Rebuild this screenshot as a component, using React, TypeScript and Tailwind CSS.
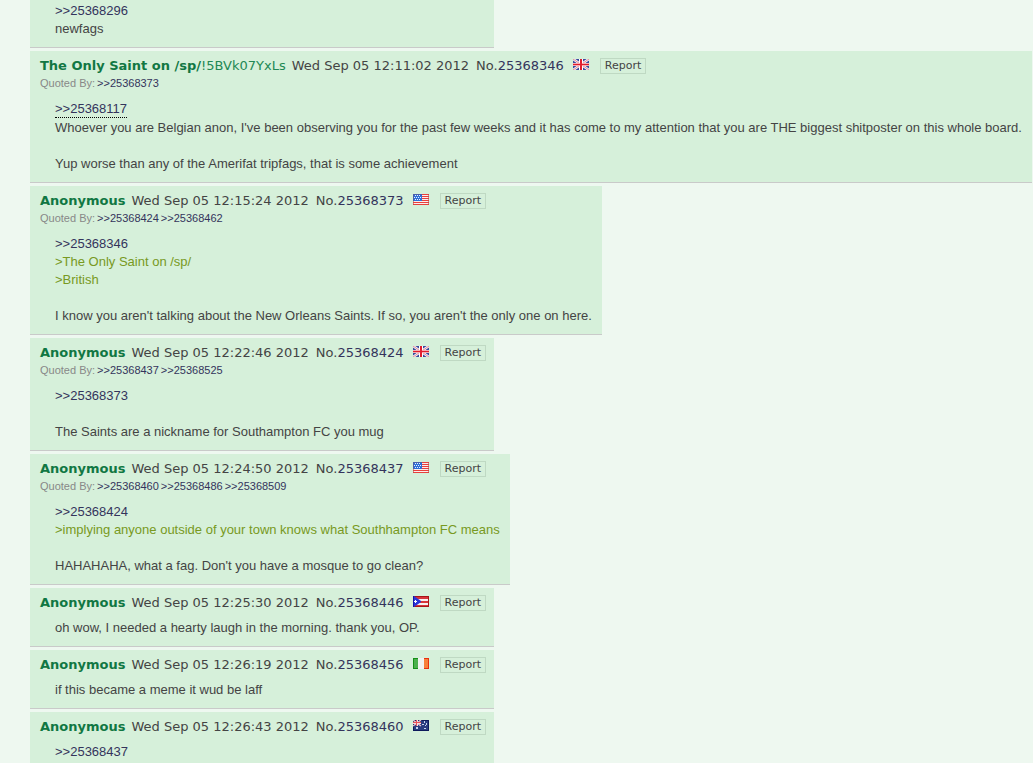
import React from "react";

type Country = "gb" | "us" | "pr" | "it" | "au";

interface Line {
  text: string;
  kind?: "link" | "backlink" | "quote";
}

interface PostData {
  no: string;
  name?: string;
  trip?: string;
  date?: string;
  country?: Country;
  quotedBy?: string[];
  lines: Line[];
}

const posts: PostData[] = [
  {
    no: "25368340",
    lines: [{ text: ">>25368296", kind: "link" }, { text: "newfags" }],
  },
  {
    no: "25368346",
    name: "The Only Saint on /sp/",
    trip: "!5BVk07YxLs",
    date: "Wed Sep 05 12:11:02 2012",
    country: "gb",
    quotedBy: ["25368373"],
    lines: [
      { text: ">>25368117", kind: "backlink" },
      {
        text: "Whoever you are Belgian anon, I've been observing you for the past few weeks and it has come to my attention that you are THE biggest shitposter on this whole board.",
      },
      { text: "" },
      {
        text: "Yup worse than any of the Amerifat tripfags, that is some achievement",
      },
    ],
  },
  {
    no: "25368373",
    name: "Anonymous",
    date: "Wed Sep 05 12:15:24 2012",
    country: "us",
    quotedBy: ["25368424", "25368462"],
    lines: [
      { text: ">>25368346", kind: "link" },
      { text: ">The Only Saint on /sp/", kind: "quote" },
      { text: ">British", kind: "quote" },
      { text: "" },
      {
        text: "I know you aren't talking about the New Orleans Saints. If so, you aren't the only one on here.",
      },
    ],
  },
  {
    no: "25368424",
    name: "Anonymous",
    date: "Wed Sep 05 12:22:46 2012",
    country: "gb",
    quotedBy: ["25368437", "25368525"],
    lines: [
      { text: ">>25368373", kind: "link" },
      { text: "" },
      { text: "The Saints are a nickname for Southampton FC you mug" },
    ],
  },
  {
    no: "25368437",
    name: "Anonymous",
    date: "Wed Sep 05 12:24:50 2012",
    country: "us",
    quotedBy: ["25368460", "25368486", "25368509"],
    lines: [
      { text: ">>25368424", kind: "link" },
      {
        text: ">implying anyone outside of your town knows what Southhampton FC means",
        kind: "quote",
      },
      { text: "" },
      { text: "HAHAHAHA, what a fag. Don't you have a mosque to go clean?" },
    ],
  },
  {
    no: "25368446",
    name: "Anonymous",
    date: "Wed Sep 05 12:25:30 2012",
    country: "pr",
    lines: [
      { text: "oh wow, I needed a hearty laugh in the morning. thank you, OP." },
    ],
  },
  {
    no: "25368456",
    name: "Anonymous",
    date: "Wed Sep 05 12:26:19 2012",
    country: "it",
    lines: [{ text: "if this became a meme it wud be laff" }],
  },
  {
    no: "25368460",
    name: "Anonymous",
    date: "Wed Sep 05 12:26:43 2012",
    country: "au",
    lines: [{ text: ">>25368437", kind: "link" }],
  },
];

function FlagArt({ country }: { country: Country }) {
  switch (country) {
    case "gb":
      return (
        <>
          <rect width="16" height="11" fill="#3a4a9c" />
          <path d="M0 0L16 11M16 0L0 11" stroke="#f3f3fb" strokeWidth="2.6" />
          <path d="M0 0L16 11M16 0L0 11" stroke="#e88a94" strokeWidth="1" />
          <path d="M6 0h4v11H6zM0 4h16v3H0z" fill="#fff" />
          <path d="M7 0h2v11H7zM0 5h16v1H0z" fill="#e01c2c" />
          <path d="M0 4h16v1H0zM0 6h16v1H0z" fill="#e83040" opacity="0.4" />
        </>
      );
    case "us":
      return (
        <>
          <rect width="16" height="11" fill="#fbeeee" />
          <path
            d="M0 0h16v1H0zM0 2h16v1H0zM0 4h16v1H0zM0 6h16v1H0zM0 8h16v1H0zM0 10h16v1H0z"
            fill="#e8403c"
          />
          <path d="M0 0h1v11H0zM15 0h1v11h-1z" fill="#c04444" opacity="0.6" />
          <path d="M0 0h9v7H0z" fill="#2f6fd8" />
          <path d="M0 0h9v1H0zM0 0h1v7H0z" fill="#4a5fa8" />
          <path
            d="M2 1h1v1H2zM4 1h1v1H4zM6 1h1v1H6zM1 3h1v1H1zM3 3h1v1H3zM5 3h1v1H5zM7 3h1v1H7zM2 5h1v1H2zM4 5h1v1H4zM6 5h1v1H6z"
            fill="#e8f0ff"
          />
        </>
      );
    case "pr":
      return (
        <>
          <rect width="16" height="11" fill="#f8f0f0" />
          <path d="M0 0h16v3H0zM0 5h16v2H0zM0 9h16v2H0z" fill="#d8343a" />
          <path d="M0 0h16v1H0zM0 10h16v1H0zM15 0h1v11h-1z" fill="#a81418" />
          <path d="M0 0h1l7 5v1l-7 5H0z" fill="#2a35d8" />
          <path d="M0 0h1v11H0z" fill="#1414a8" />
          <path d="M2 4h1v1h1v1H3v1H2V6H1V5h1z" fill="#fff" />
        </>
      );
    case "it":
      return (
        <>
          <path d="M0 0h5v11H0z" fill="#159018" />
          <path d="M1 1h4v9H1z" fill="#4cb04e" />
          <path d="M5 0h6v11H5z" fill="#f2f2f2" />
          <path d="M11 0h5v11h-5z" fill="#e83010" />
          <path d="M11 1h4v9h-4z" fill="#f8803c" />
        </>
      );
    case "au":
      return (
        <>
          <rect width="16" height="11" fill="#0e1a5c" />
          <path d="M1 1h14v9H1z" fill="#2a3c80" />
          <path d="M0 0l8 6M8 0L0 6" stroke="#e8c0cc" strokeWidth="1.4" />
          <path d="M3 0h2v6H3zM0 2h8v2H0z" fill="#f4dce0" />
          <path d="M3 0h1v6H3zM0 2h8v1H0z" fill="#e85058" />
          <path
            d="M3 7h2v2H3zM11 1h1v2h-1zM9 4h2v1H9zM13 3h1v2h-1zM11 8h2v1h-2zM12 5h1v1h-1z"
            fill="#c8d4f0"
          />
        </>
      );
  }
}

function Flag({ country }: { country: Country }) {
  return (
    <svg
      className="mr-[11px] mb-[3px] ml-[9px] h-[11px] w-4 shrink-0"
      viewBox="0 0 16 11"
      aria-label={country}
    >
      <FlagArt country={country} />
    </svg>
  );
}

function PostLine({ line }: { line: Line }) {
  if (line.kind === "link" || line.kind === "backlink") {
    return (
      <a
        href={"#p" + line.text.slice(2)}
        className={
          line.kind === "backlink"
            ? "mb-px block w-fit border-b border-dotted border-black leading-[17px] text-[#34345c]"
            : "block w-fit text-[#34345c]"
        }
      >
        {line.text}
      </a>
    );
  }
  if (line.kind === "quote") {
    return <p className="text-[#789922]">{line.text}</p>;
  }
  return <p className="min-h-[18px]">{line.text}</p>;
}

function Post({ post }: { post: PostData }) {
  return (
    <article
      id={"p" + post.no}
      className="w-fit min-w-[464px] border-b border-[#c9cac9] bg-[#d6f0da] pr-2 pb-[9px] pl-[10px]"
    >
      {post.name && (
        <header className="pt-[6px] pb-[7px]">
          <div className="flex h-[18px] items-center font-['DejaVu_Sans',sans-serif] text-[13px] leading-[18px] whitespace-nowrap">
            <strong className="font-bold text-[#117743]">{post.name}</strong>
            {post.trip && <span className="text-[#228854]">{post.trip}</span>}
            <time className="ml-[6px]">{post.date}</time>
            <a href={"#p" + post.no} className="ml-[7px] text-[#34345c]">
              <span className="text-[#444444]">No.</span>
              {post.no}
            </a>
            {post.country && <Flag country={post.country} />}
            <button
              type="button"
              className="h-4 border border-[#bfd9c3] px-1 text-[11px] leading-[14px]"
            >
              Report
            </button>
          </div>
          {post.quotedBy && (
            <div className="flex gap-[2px] pb-[2px] text-[11px] leading-4 text-[#888888]">
              <span>Quoted By:</span>
              {post.quotedBy.map((no) => (
                <a key={no} href={"#p" + no} className="text-[#34345c]">
                  &gt;&gt;{no}
                </a>
              ))}
            </div>
          )}
        </header>
      )}
      <div className="mr-[2px] ml-[15px] text-[13px] leading-[18px]">
        {post.lines.map((line, i) => (
          <PostLine key={i} line={line} />
        ))}
      </div>
    </article>
  );
}

export default function App() {
  return (
    <main className="h-screen overflow-hidden bg-[#eef8f0] font-['Liberation_Sans',Arial,sans-serif] text-[#444444]">
      <div className="flex flex-col gap-[3px] pl-[30px]">
        <div className="w-fit bg-[#d6f0da] pt-[2px]">
          <Post post={posts[0]} />
        </div>
        {posts.slice(1).map((post) => (
          <Post key={post.no} post={post} />
        ))}
      </div>
    </main>
  );
}
